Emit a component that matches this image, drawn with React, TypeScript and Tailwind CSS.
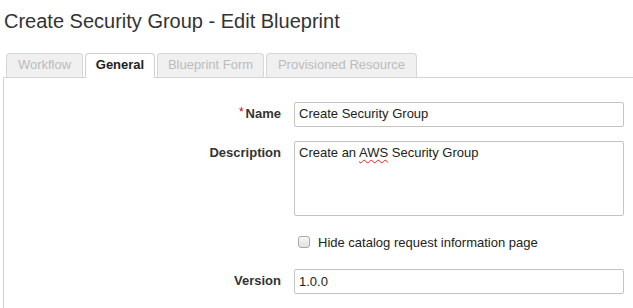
import React from "react";

const tabs = [
  { label: "Workflow", w: "w-[77px]", active: false },
  { label: "General", w: "w-[70px]", active: true },
  { label: "Blueprint Form", w: "w-[107px]", active: false },
  { label: "Provisioned Resource", w: "w-[151px]", active: false },
];

function Row({
  label,
  required,
  children,
}: {
  label?: string;
  required?: boolean;
  children: React.ReactNode;
}) {
  return (
    <div className="flex items-start gap-[13px]">
      <div className="w-[277px] shrink-0 text-right font-bold text-[13px] leading-[16px] pt-[4px] text-[#333]">
        {required && (
          <span className="text-[#d0021b] font-normal text-[12px] align-top relative top-[-2px] mr-[2px]">*</span>
        )}
        {label}
      </div>
      {children}
    </div>
  );
}

export default function App() {
  return (
    <div className="w-[633px] h-[308px] overflow-hidden bg-white text-[#333] font-['Liberation_Sans',Arial,sans-serif]">
      <h1 className="pl-[4px] pt-[9px] text-[20px] leading-[24px] text-[#333] font-normal">
        Create Security Group - Edit Blueprint
      </h1>
      <div className="mt-[20px] pl-[6px] flex items-end gap-[2px] relative z-10">
        {tabs.map((t) => (
          <div
            key={t.label}
            className={
              t.active
                ? `${t.w} h-[25px] -mb-px rounded-t-[4px] border border-b-0 border-[#cfcfcf] bg-white text-center text-[13px] leading-[16px] pt-[3px] font-bold text-[#222]`
                : `${t.w} h-[24px] rounded-t-[4px] border border-b-0 border-[#d6d6d6] bg-[#f0f0f0] text-center text-[13px] leading-[16px] pt-[3px] text-[#bcbcbc]`
            }
          >
            {t.label}
          </div>
        ))}
      </div>
      <div className="ml-[3px] border-l border-t border-[#d4d4d4] pt-[24px] h-[260px]">
        <div className="flex flex-col">
          <Row label="Name" required>
            <div className="w-[330px] h-[25px] border border-[#c4c4c4] rounded-[2px] px-[4px] pt-[3px] text-[13px] leading-[16px] text-[#222]">
              Create Security Group
            </div>
          </Row>
          <div className="h-[14px]" />
          <Row label="Description">
            <div className="w-[330px] h-[75px] border border-[#c4c4c4] rounded-[2px] px-[4px] pt-[3px] text-[13px] leading-[16px] text-[#222]">
              Create an{" "}
              <span className="underline decoration-wavy decoration-[#e02020] decoration-[1px] underline-offset-[2px]">
                AWS
              </span>{" "}
              Security Group
            </div>
          </Row>
          <div className="h-[16px]" />
          <div className="flex items-center h-[20px] pl-[294px]">
            <div className="w-[12px] h-[12px] rounded-[3px] border border-[#a9a9a9] bg-gradient-to-b from-[#f8f8f8] to-[#e2e2e2]" />
            <span className="ml-[8px] text-[13px] leading-[16px] text-[#222] relative top-[1px]">
              Hide catalog request information page
            </span>
          </div>
          <div className="h-[17px]" />
          <Row label="Version">
            <div className="w-[330px] h-[25px] border border-[#c4c4c4] rounded-[2px] px-[4px] pt-[4px] text-[13px] leading-[16px] text-[#222]">
              1.0.0
            </div>
          </Row>
        </div>
      </div>
    </div>
  );
}
